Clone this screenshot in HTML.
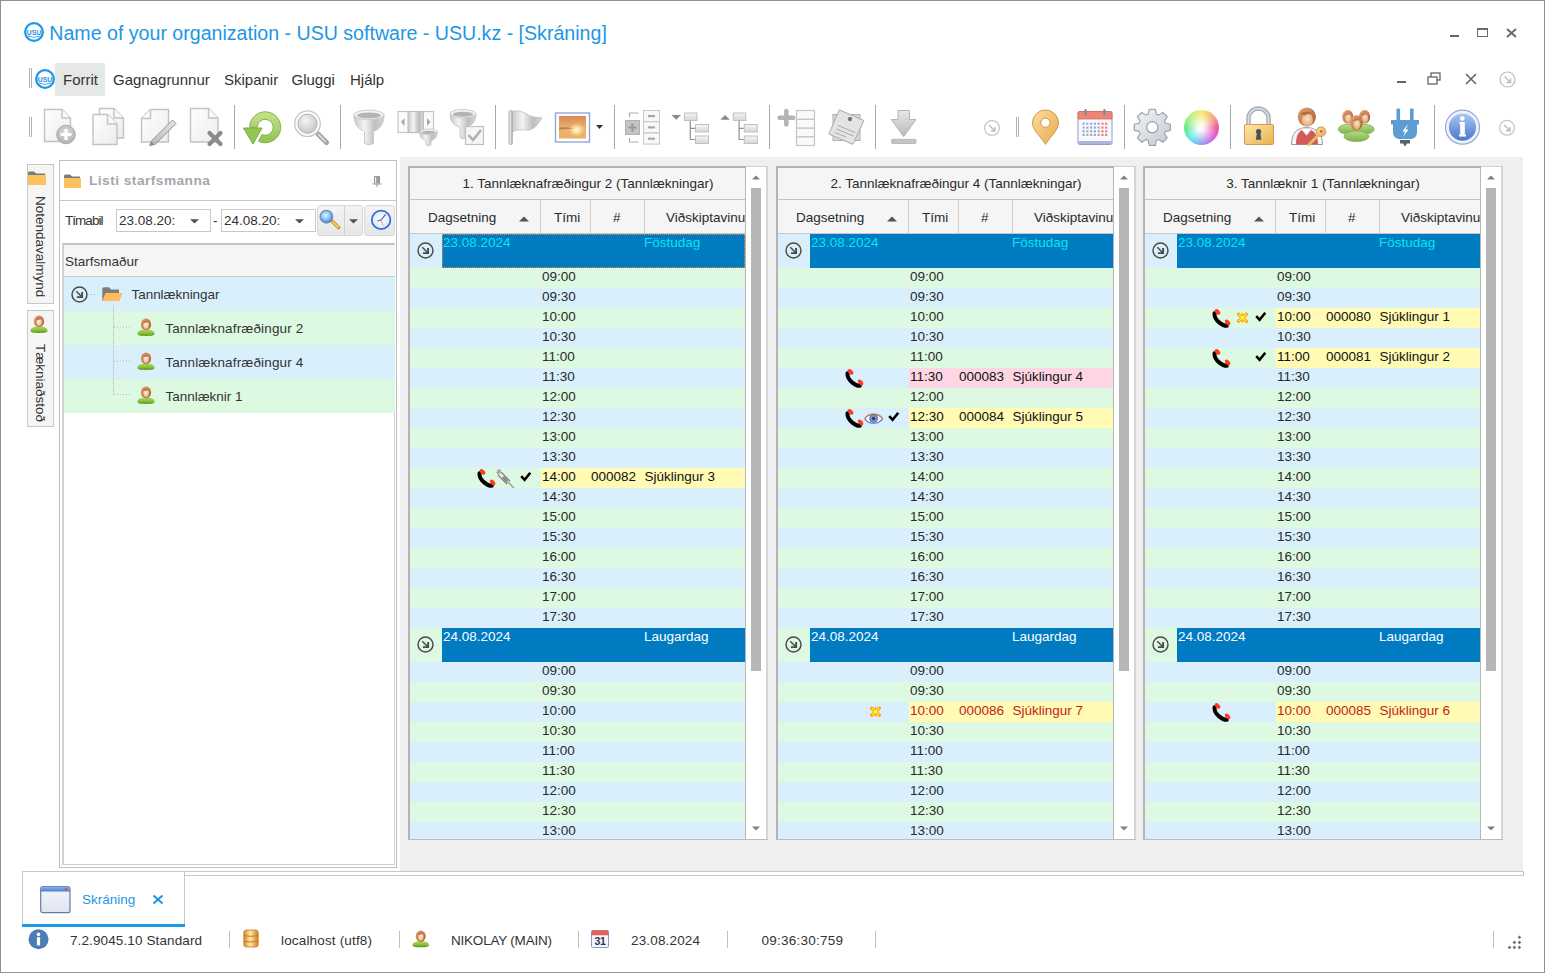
<!DOCTYPE html><html><head><meta charset="utf-8"><style>
html,body{margin:0;padding:0}
body{width:1545px;height:973px;position:relative;overflow:hidden;background:#fff;font-family:"Liberation Sans",sans-serif}
.t{position:absolute;white-space:pre;line-height:1;}
</style></head><body><div style="position:absolute;left:0px;top:0px;width:1545px;height:973px;box-sizing:border-box;border:1px solid #909090"></div>
<svg style="position:absolute;left:24px;top:22px" width="20" height="20" viewBox="0 0 20 20"><circle cx="10.0" cy="10.0" r="8.8" fill="none" stroke="#1e96ea" stroke-width="2.3"/><text x="10.0" y="12.5" text-anchor="middle" font-family="Liberation Sans" font-weight="700" font-size="7.6" fill="#1e8ee6" textLength="14.5" lengthAdjust="spacingAndGlyphs">USU</text><path d="M4.0 14.2 Q10.0 16.5 16.0 14.2" fill="none" stroke="#1e96ea" stroke-width="0.8"/></svg>
<div class="t" style="left:49.3px;top:24.41px;font-size:19.6px;color:#1e96e6;font-weight:400;">Name of your organization - USU software - USU.kz - [Skráning]</div>
<div style="position:absolute;left:1450px;top:35px;width:9px;height:2px;background:#666"></div>
<div style="position:absolute;left:1477px;top:28px;width:11px;height:9px;box-sizing:border-box;border:1px solid #6a6a6a;border-top-width:2px"></div>
<svg style="position:absolute;left:1506px;top:28px" width="11" height="10" viewBox="0 0 11 10"><path d="M1 1L10 9M10 1L1 9" stroke="#666" stroke-width="1.8"/></svg>
<div style="position:absolute;left:29px;top:68px;width:1px;height:20px;background:#b0b0b0"></div>
<div style="position:absolute;left:31px;top:68px;width:1px;height:20px;background:#b0b0b0"></div>
<svg style="position:absolute;left:35px;top:69px" width="20" height="20" viewBox="0 0 20 20"><circle cx="10.0" cy="10.0" r="8.8" fill="none" stroke="#1e96ea" stroke-width="2.3"/><text x="10.0" y="12.5" text-anchor="middle" font-family="Liberation Sans" font-weight="700" font-size="7.6" fill="#1e8ee6" textLength="14.5" lengthAdjust="spacingAndGlyphs">USU</text><path d="M4.0 14.2 Q10.0 16.5 16.0 14.2" fill="none" stroke="#1e96ea" stroke-width="0.8"/></svg>
<div style="position:absolute;left:55px;top:63px;width:50px;height:33px;background:#e6e7e7"></div>
<div class="t" style="left:63px;top:72.3px;font-size:15px;color:#333;font-weight:400;">Forrit</div>
<div class="t" style="left:113px;top:72.3px;font-size:15px;color:#333;font-weight:400;">Gagnagrunnur</div>
<div class="t" style="left:224px;top:72.3px;font-size:15px;color:#333;font-weight:400;">Skipanir</div>
<div class="t" style="left:291.5px;top:72.3px;font-size:15px;color:#333;font-weight:400;">Gluggi</div>
<div class="t" style="left:350px;top:72.3px;font-size:15px;color:#333;font-weight:400;">Hjálp</div>
<div style="position:absolute;left:1397px;top:81px;width:9px;height:2px;background:#666"></div>
<svg style="position:absolute;left:1427px;top:72px" width="14" height="14" viewBox="0 0 14 14"><rect x="4" y="1" width="9" height="7" fill="none" stroke="#666" stroke-width="1.3"/><rect x="1" y="5" width="9" height="7" fill="#fff" stroke="#666" stroke-width="1.3"/></svg>
<svg style="position:absolute;left:1465px;top:73px" width="12" height="12" viewBox="0 0 12 12"><path d="M1 1L11 11M11 1L1 11" stroke="#666" stroke-width="1.6"/></svg>
<svg style="position:absolute;left:1499px;top:71px" width="17" height="17" viewBox="0 0 17 17"><circle cx="8.5" cy="8.5" r="7.5" fill="none" stroke="#bbb" stroke-width="1.2"/><path d="M5.5 5.5L11.5 11.5M11.5 7.5V11.5H7.5" fill="none" stroke="#bbb" stroke-width="1.4"/></svg>
<svg style="position:absolute;left:0;top:0" width="1545" height="160" viewBox="0 0 1545 160"><defs>
<linearGradient id="gPage" x1="0" y1="0" x2="1" y2="1"><stop offset="0" stop-color="#ffffff"/><stop offset="1" stop-color="#ececec"/></linearGradient>
<linearGradient id="gMetal" x1="0" y1="0" x2="1" y2="0"><stop offset="0" stop-color="#c8c8c8"/><stop offset="0.35" stop-color="#f4f4f4"/><stop offset="0.7" stop-color="#bdbdbd"/><stop offset="1" stop-color="#d8d8d8"/></linearGradient>
<linearGradient id="gMetalV" x1="0" y1="0" x2="0" y2="1"><stop offset="0" stop-color="#e8e8e8"/><stop offset="1" stop-color="#b8b8b8"/></linearGradient>
<radialGradient id="gPlusC" cx="0.5" cy="0.4" r="0.6"><stop offset="0" stop-color="#e0e0e0"/><stop offset="1" stop-color="#b0b0b0"/></radialGradient>
<linearGradient id="gGreen" x1="0" y1="0" x2="0" y2="1"><stop offset="0" stop-color="#c6e38f"/><stop offset="1" stop-color="#8ec450"/></linearGradient>
<radialGradient id="gLens" cx="0.4" cy="0.35" r="0.7"><stop offset="0" stop-color="#f4f4f4"/><stop offset="1" stop-color="#c4c4c4"/></radialGradient>
<linearGradient id="gPhoto" x1="0" y1="0" x2="0" y2="1"><stop offset="0" stop-color="#d88a55"/><stop offset="0.55" stop-color="#f0b070"/><stop offset="1" stop-color="#e8b060"/></linearGradient>
<radialGradient id="gSun" cx="0.65" cy="0.62" r="0.35"><stop offset="0" stop-color="#fffbe0"/><stop offset="0.5" stop-color="#fce4a0" stop-opacity="0.7"/><stop offset="1" stop-color="#f0b070" stop-opacity="0"/></radialGradient>
<linearGradient id="gBoxG" x1="0" y1="0" x2="0" y2="1"><stop offset="0" stop-color="#f6f6f6"/><stop offset="1" stop-color="#d6d6d6"/></linearGradient>
<linearGradient id="gGold" x1="0" y1="0" x2="1" y2="1"><stop offset="0" stop-color="#fbe0a0"/><stop offset="1" stop-color="#e8a850"/></linearGradient>
<linearGradient id="gLock" x1="0" y1="0" x2="1" y2="1"><stop offset="0" stop-color="#fde9a8"/><stop offset="1" stop-color="#e9b04f"/></linearGradient>
<linearGradient id="gGear" x1="0" y1="0" x2="1" y2="1"><stop offset="0" stop-color="#f2f4f8"/><stop offset="1" stop-color="#c4c8d0"/></linearGradient>
<linearGradient id="gInfo" x1="0" y1="0" x2="0" y2="1"><stop offset="0" stop-color="#a8c8f4"/><stop offset="1" stop-color="#4a78c8"/></linearGradient>
<linearGradient id="gUGreen" x1="0" y1="0" x2="0" y2="1"><stop offset="0" stop-color="#b8dc88"/><stop offset="1" stop-color="#7cb048"/></linearGradient>
<linearGradient id="gHair" x1="0" y1="0" x2="1" y2="1"><stop offset="0" stop-color="#e4a878"/><stop offset="1" stop-color="#a85a30"/></linearGradient>
<radialGradient id="gFace" cx="0.5" cy="0.4" r="0.6"><stop offset="0" stop-color="#fde0c0"/><stop offset="1" stop-color="#e0a878"/></radialGradient>
</defs><rect x="29" y="117" width="1" height="20" fill="#b4b4b4"/><rect x="31" y="117" width="1" height="20" fill="#b4b4b4"/><rect x="234" y="105" width="1" height="44" fill="#a8a8a8"/><rect x="340" y="105" width="1" height="44" fill="#a8a8a8"/><rect x="495" y="105" width="1" height="44" fill="#a8a8a8"/><rect x="614" y="105" width="1" height="44" fill="#a8a8a8"/><rect x="769" y="105" width="1" height="44" fill="#a8a8a8"/><rect x="875" y="105" width="1" height="44" fill="#a8a8a8"/><rect x="1124" y="105" width="1" height="44" fill="#a8a8a8"/><rect x="1230" y="105" width="1" height="44" fill="#a8a8a8"/><rect x="1434" y="105" width="1" height="44" fill="#a8a8a8"/><rect x="1016" y="117" width="1" height="20" fill="#b4b4b4"/><rect x="1018" y="117" width="1" height="20" fill="#b4b4b4"/><path d="M44.5 109.5H62L70.5 118V141.5H44.5Z" fill="url(#gPage)" stroke="#c2c2c2" stroke-width="1.4"/><path d="M62 109.5V118H70.5" fill="#fafafa" stroke="#c2c2c2" stroke-width="1.4" stroke-linejoin="round"/><circle cx="66" cy="134.5" r="9.3" fill="url(#gPlusC)" stroke="#aaaaaa" stroke-width="1"/><path d="M66 129V140M60.5 134.5H71.5" stroke="#ffffff" stroke-width="3.2"/><path d="M99.5 108.5H114L123.5 118V138H99.5Z" fill="url(#gPage)" stroke="#c2c2c2" stroke-width="1.4"/><path d="M114 108.5V118H123.5" fill="#fafafa" stroke="#c2c2c2" stroke-width="1.4" stroke-linejoin="round"/><path d="M93 114.5H107.5L117 124V144.5H93Z" fill="url(#gPage)" stroke="#c2c2c2" stroke-width="1.4"/><path d="M107.5 114.5V124H117" fill="#fafafa" stroke="#c2c2c2" stroke-width="1.4" stroke-linejoin="round"/><path d="M150.5 109.5H168.5V142H141.5V118.5Z" fill="url(#gPage)" stroke="#c2c2c2" stroke-width="1.4"/><path d="M150.5 109.5V118.5H141.5" fill="#fafafa" stroke="#c2c2c2" stroke-width="1.4" stroke-linejoin="round"/><path d="M151 141.5L172.5 120L176 123.5L154.5 145Z" fill="url(#gMetalV)" stroke="#909090" stroke-width="1"/><path d="M149 146L151 141.5L154.5 145Z" fill="#888"/><path d="M190.5 108.5H208.5L218 118V142H190.5Z" fill="url(#gPage)" stroke="#c2c2c2" stroke-width="1.4"/><path d="M208.5 108.5V118H218" fill="#fafafa" stroke="#c2c2c2" stroke-width="1.4" stroke-linejoin="round"/><path d="M209.5 133L220.5 144M220.5 133L209.5 144" stroke="#8a8a8a" stroke-width="4.2" stroke-linecap="round"/><path d="M249.7 127.3 A15.5 15.5 0 1 1 258.65 141.35 L261.8 134.55 A8 8 0 1 0 257.2 127.3 Z" fill="url(#gGreen)" stroke="#86b048" stroke-width="1"/><path d="M243.5 128H262L253 144Z" fill="#92c654" stroke="#7aa83e" stroke-width="1" stroke-linejoin="round"/><path d="M318 134L326.5 142.5" stroke="#a4a4a4" stroke-width="5.2" stroke-linecap="round"/><path d="M318.5 134.5L325.5 141.5" stroke="#e4e4e4" stroke-width="1.6" stroke-linecap="round"/><circle cx="307.5" cy="123.7" r="12.8" fill="#fbfbfb" stroke="#c4c4c4" stroke-width="1.2"/><circle cx="307.5" cy="123.7" r="9.6" fill="url(#gLens)" stroke="#b4b4b4" stroke-width="1"/><path d="M354.0 114.8 C354.0 129.25 363.5 130.1 364.5 131.8 V143.5 Q369 146 373.5 143.5 V131.8 C374.5 130.1 384.0 129.25 384.0 114.8Z" fill="url(#gMetal)" stroke="#bdbdbd" stroke-width="0.8"/><ellipse cx="369" cy="114.8" rx="15.0" ry="4.8" fill="#f2f2f2" stroke="#c4c4c4" stroke-width="0.8"/><ellipse cx="369" cy="115.39999999999999" rx="12.0" ry="2.88" fill="#b4b4b4"/><rect x="398" y="111.5" width="35.5" height="21" fill="#fafafa" stroke="#c4c4c4" stroke-width="1.2"/><rect x="408" y="111.5" width="15.5" height="21" fill="url(#gMetal)" stroke="#bcbcbc" stroke-width="1"/><path d="M404.5 118V126L401 122Z" fill="#a8a8a8"/><path d="M427 118V126L430.5 122Z" fill="#a8a8a8"/><path d="M419.75 131.8 C419.75 139.45000000000002 425.0 139.9 426.0 140.8 V144.5 Q428.5 147 431.0 144.5 V140.8 C432.0 139.9 437.25 139.45000000000002 437.25 131.8Z" fill="url(#gMetal)" stroke="#bdbdbd" stroke-width="0.8"/><ellipse cx="428.5" cy="131.8" rx="8.75" ry="2.8000000000000003" fill="#f2f2f2" stroke="#c4c4c4" stroke-width="0.8"/><ellipse cx="428.5" cy="132.4" rx="7.0" ry="1.6800000000000002" fill="#b4b4b4"/><path d="M450.0 113.66 C450.0 125.56 459.0 126.25999999999999 460.0 127.66 V137.5 Q463 140 466.0 137.5 V127.66 C467.0 126.25999999999999 476.0 125.56 476.0 113.66Z" fill="url(#gMetal)" stroke="#bdbdbd" stroke-width="0.8"/><ellipse cx="463" cy="113.66" rx="13.0" ry="4.16" fill="#f2f2f2" stroke="#c4c4c4" stroke-width="0.8"/><ellipse cx="463" cy="114.25999999999999" rx="10.4" ry="2.496" fill="#b4b4b4"/><rect x="465.5" y="126.5" width="18" height="18" fill="#f6f6f6" stroke="#c0c0c0" stroke-width="1.2"/><path d="M468.5 135L473 140L481 130" fill="none" stroke="#b0b0b0" stroke-width="2.6"/><path d="M512 111.5 C520 109 526 114 530 116 C535 118 539 117 542 118 C538 124 534 130 528 130 C522 130 518 129 512 132Z" fill="url(#gMetal)" stroke="#bcbcbc" stroke-width="0.8"/><rect x="509" y="110.5" width="3.4" height="34" rx="1.5" fill="url(#gMetal)" stroke="#a8a8a8" stroke-width="0.8"/><rect x="555.5" y="113" width="34" height="29" fill="#fff" stroke="#93a6d6" stroke-width="1.4"/><rect x="559" y="116" width="27" height="22.5" fill="url(#gPhoto)"/><rect x="559" y="116" width="27" height="22.5" fill="url(#gSun)"/><path d="M559 127.5 Q566 126.5 574 128.5 L559 129.5Z" fill="#8a6040" opacity="0.55"/><path d="M596 125H603L599.5 129Z" fill="#333"/><rect x="625.5" y="120.5" width="14" height="14" fill="#c4c4c4" stroke="#b0b0b0" stroke-width="1"/><path d="M632.5 123.5V131.5M628.5 127.5H636.5" stroke="#9a9a9a" stroke-width="2.2"/><path d="M638.5 113H629.5V117M638.5 142H629.5V138" fill="none" stroke="#b0b0b0" stroke-width="1.2"/><rect x="643.5" y="110.5" width="16" height="11" fill="#f8f8f8" stroke="#c8c8c8" stroke-width="1"/><rect x="648" y="115.0" width="7" height="2.2" fill="#a8a8a8"/><rect x="643.5" y="121.8" width="16" height="11" fill="#f8f8f8" stroke="#c8c8c8" stroke-width="1"/><rect x="648" y="126.3" width="7" height="2.2" fill="#a8a8a8"/><rect x="643.5" y="133.1" width="16" height="11" fill="#f8f8f8" stroke="#c8c8c8" stroke-width="1"/><rect x="648" y="137.6" width="7" height="2.2" fill="#a8a8a8"/><path d="M671.5 115H681.0L676.25 119.8Z" fill="#8a8a8a"/><path d="M690.3 120.5V139.5H695.0M690.3 128.3H695.0" fill="none" stroke="#909090" stroke-width="1.2"/><rect x="684.5" y="113" width="12.5" height="7.5" fill="url(#gBoxG)" stroke="#c0c0c0" stroke-width="1"/><rect x="695.5" y="124.5" width="13" height="7.5" fill="url(#gBoxG)" stroke="#c0c0c0" stroke-width="1"/><rect x="695.5" y="136" width="13" height="7.5" fill="url(#gBoxG)" stroke="#c0c0c0" stroke-width="1"/><path d="M720.3 119.8H729.8L725.05 115Z" fill="#8a8a8a"/><path d="M739.0999999999999 120.5V139.5H743.8M739.0999999999999 128.3H743.8" fill="none" stroke="#909090" stroke-width="1.2"/><rect x="733.3" y="113" width="12.5" height="7.5" fill="url(#gBoxG)" stroke="#c0c0c0" stroke-width="1"/><rect x="744.3" y="124.5" width="13" height="7.5" fill="url(#gBoxG)" stroke="#c0c0c0" stroke-width="1"/><rect x="744.3" y="136" width="13" height="7.5" fill="url(#gBoxG)" stroke="#c0c0c0" stroke-width="1"/><path d="M786.3 111V124.5M779.5 117.7H793.3" stroke="#b4b4b4" stroke-width="4.5" stroke-linecap="round"/><rect x="796.5" y="110.5" width="18" height="35" fill="#fafafa" stroke="#c4c4c4" stroke-width="1.2"/><rect x="797" y="118.60000000000001" width="17" height="1.4" fill="#c4c4c4"/><rect x="797" y="127.4" width="17" height="1.4" fill="#c4c4c4"/><rect x="797" y="136.1" width="17" height="1.4" fill="#c4c4c4"/><rect x="833" y="114.5" width="27" height="26" fill="#d8d8d8" stroke="#b0b0b0" stroke-width="1"/><path d="M839.3 109.8L863.9 120.5L852.8 144.4L828.9 134Z" fill="#e4e4e4" stroke="#aaaaaa" stroke-width="1"/><circle cx="850" cy="119" r="2.2" fill="#777"/><path d="M838 125.5L855 132.5M836.5 129L853.5 136M835 132.5L846 137" stroke="#a0a0a0" stroke-width="0.9"/><path d="M898 110.5H909.5V119.5H916L903.7 136.7L891.3 119.5H898Z" fill="url(#gMetalV)" stroke="#b4b4b4" stroke-width="1"/><rect x="891.5" y="139.3" width="24.5" height="4.2" rx="1" fill="#c4c4c4" stroke="#b0b0b0" stroke-width="0.8"/><circle cx="992" cy="128" r="7.4" fill="none" stroke="#c4c4c4" stroke-width="1.2"/><path d="M989 125L995 131M995 127V131H991" fill="none" stroke="#bcbcbc" stroke-width="1.4"/><circle cx="1507" cy="127.8" r="7.4" fill="none" stroke="#c4c4c4" stroke-width="1.2"/><path d="M1504 124.8L1510 130.8M1510 126.8V130.8H1506" fill="none" stroke="#bcbcbc" stroke-width="1.4"/><path d="M1045.5 144.4 C1041 137 1032.5 130 1032.5 123 A13 13 0 0 1 1058.5 123 C1058.5 130 1050 137 1045.5 144.4Z" fill="url(#gGold)" stroke="#d09848" stroke-width="1"/><circle cx="1045.4" cy="122.7" r="4.6" fill="#fff" stroke="#d09848" stroke-width="1"/><rect x="1078" y="111.5" width="34" height="33" rx="1.5" fill="#f8faff" stroke="#8c9ccf" stroke-width="1"/><path d="M1078 113A1.5 1.5 0 0 1 1079.5 111.5H1110.5A1.5 1.5 0 0 1 1112 113V119H1078Z" fill="#ee8474" stroke="#d86a5c" stroke-width="0.8"/><rect x="1078.5" y="141" width="33" height="3" fill="#aab6dc"/><rect x="1084.5" y="109" width="2.2" height="6.5" rx="1" fill="#7a8aa0"/><rect x="1103.3" y="109" width="2.2" height="6.5" rx="1" fill="#7a8aa0"/><rect x="1082.50" y="122.60" width="2.2" height="2.2" fill="#9ea8cc"/><rect x="1086.27" y="122.60" width="2.2" height="2.2" fill="#9ea8cc"/><rect x="1090.04" y="122.60" width="2.2" height="2.2" fill="#9ea8cc"/><rect x="1093.81" y="122.60" width="2.2" height="2.2" fill="#9ea8cc"/><rect x="1097.58" y="122.60" width="2.2" height="2.2" fill="#9ea8cc"/><rect x="1101.35" y="122.60" width="2.2" height="2.2" fill="#f08070"/><rect x="1105.12" y="122.60" width="2.2" height="2.2" fill="#f08070"/><rect x="1082.50" y="126.50" width="2.2" height="2.2" fill="#9ea8cc"/><rect x="1086.27" y="126.50" width="2.2" height="2.2" fill="#9ea8cc"/><rect x="1090.04" y="126.50" width="2.2" height="2.2" fill="#9ea8cc"/><rect x="1093.81" y="126.50" width="2.2" height="2.2" fill="#9ea8cc"/><rect x="1097.58" y="126.50" width="2.2" height="2.2" fill="#9ea8cc"/><rect x="1101.35" y="126.50" width="2.2" height="2.2" fill="#f08070"/><rect x="1105.12" y="126.50" width="2.2" height="2.2" fill="#f08070"/><rect x="1082.50" y="130.20" width="2.2" height="2.2" fill="#9ea8cc"/><rect x="1086.27" y="130.20" width="2.2" height="2.2" fill="#9ea8cc"/><rect x="1090.04" y="130.20" width="2.2" height="2.2" fill="#9ea8cc"/><rect x="1093.81" y="130.20" width="2.2" height="2.2" fill="#9ea8cc"/><rect x="1097.58" y="130.20" width="2.2" height="2.2" fill="#9ea8cc"/><rect x="1101.35" y="130.20" width="2.2" height="2.2" fill="#f08070"/><rect x="1105.12" y="130.20" width="2.2" height="2.2" fill="#f08070"/><rect x="1082.50" y="133.80" width="2.2" height="2.2" fill="#9ea8cc"/><rect x="1086.27" y="133.80" width="2.2" height="2.2" fill="#9ea8cc"/><rect x="1090.04" y="133.80" width="2.2" height="2.2" fill="#9ea8cc"/><rect x="1093.81" y="133.80" width="2.2" height="2.2" fill="#9ea8cc"/><rect x="1097.58" y="133.80" width="2.2" height="2.2" fill="#9ea8cc"/><rect x="1101.35" y="133.80" width="2.2" height="2.2" fill="#f08070"/><rect x="1105.12" y="133.80" width="2.2" height="2.2" fill="#f08070"/><path d="M1148.22 114.12 L1149.20 109.26 L1155.40 109.26 L1156.38 114.12 L1158.74 115.09 L1162.86 112.36 L1167.24 116.74 L1164.51 120.86 L1165.48 123.22 L1170.34 124.20 L1170.34 130.40 L1165.48 131.38 L1164.51 133.74 L1167.24 137.86 L1162.86 142.24 L1158.74 139.51 L1156.38 140.48 L1155.40 145.34 L1149.20 145.34 L1148.22 140.48 L1145.86 139.51 L1141.74 142.24 L1137.36 137.86 L1140.09 133.74 L1139.12 131.38 L1134.26 130.40 L1134.26 124.20 L1139.12 123.22 L1140.09 120.86 L1137.36 116.74 L1141.74 112.36 L1145.86 115.09Z" fill="url(#gGear)" stroke="#9a9ea8" stroke-width="1.1" stroke-linejoin="round"/><circle cx="1152.3" cy="127.3" r="5.6" fill="#fff" stroke="#9a9ea8" stroke-width="1.2"/><path d="M1248.5 125V118.5A10 10 0 0 1 1268.5 118.5V125" fill="none" stroke="#a8b0bc" stroke-width="4.5"/><path d="M1248.5 125V118.5A10 10 0 0 1 1268.5 118.5V125" fill="none" stroke="#dce0e6" stroke-width="1.5"/><rect x="1244.5" y="124.5" width="29" height="20" rx="1.5" fill="url(#gLock)" stroke="#d49a50" stroke-width="1"/><circle cx="1258.6" cy="131.5" r="2.6" fill="#4a5060"/><path d="M1257 132L1255.8 139.8H1261.4L1260.2 132Z" fill="#4a5060"/><path d="M1291.5 144.5C1291.5 134 1296 128 1306.5 127.5C1317 128 1322.5 134 1322.5 144.5Z" fill="#f6f6f6" stroke="#9a9a9a" stroke-width="1"/><path d="M1296 144.5C1296 134 1299 130 1306.5 129C1314 130 1318 134 1318 144.5Z" fill="#d25a58"/><path d="M1300.5 128.2L1306.5 135.5L1312.5 128.2Z" fill="#ffffff" stroke="#bbb" stroke-width="0.6"/><ellipse cx="1306.8" cy="116.8" rx="9.2" ry="9.4" fill="url(#gHair)"/><ellipse cx="1307.3" cy="120" rx="5.6" ry="6.8" fill="url(#gFace)"/><path d="M1299.5 114 Q1306 109.5 1314.5 114.5 Q1310 112.5 1304 115.5Z" fill="#b86a3c"/><circle cx="1321" cy="131.7" r="4.8" fill="url(#gGold)" stroke="#d09848" stroke-width="1"/><circle cx="1321.3" cy="131.4" r="1.4" fill="#b07838"/><path d="M1318.5 135L1309 144.5" stroke="#f0b860" stroke-width="3" stroke-linecap="round"/><ellipse cx="1347.8" cy="129.25" rx="9.5" ry="4.95" fill="url(#gUGreen)" stroke="#86b054" stroke-width="0.8"/><ellipse cx="1347.8" cy="116.82" rx="5.609999999999999" ry="6.8" fill="url(#gHair)"/><ellipse cx="1348.1" cy="118.18" rx="3.23" ry="4.76" fill="url(#gFace)"/><path d="M1343.975 114.95 Q1347.8 111.55 1352.05 115.375 Q1348.6499999999999 113.675 1345.675 115.8Z" fill="#c07a48"/><ellipse cx="1364.6" cy="129.25" rx="9.5" ry="4.95" fill="url(#gUGreen)" stroke="#86b054" stroke-width="0.8"/><ellipse cx="1364.6" cy="116.82" rx="5.609999999999999" ry="6.8" fill="url(#gHair)"/><ellipse cx="1364.8999999999999" cy="118.18" rx="3.23" ry="4.76" fill="url(#gFace)"/><path d="M1360.7749999999999 114.95 Q1364.6 111.55 1368.85 115.375 Q1365.4499999999998 113.675 1362.475 115.8Z" fill="#c07a48"/><ellipse cx="1356.5" cy="136.325" rx="12.5" ry="5.2250000000000005" fill="url(#gUGreen)" stroke="#86b054" stroke-width="0.8"/><ellipse cx="1356.5" cy="122.74" rx="6.27" ry="7.6" fill="url(#gHair)"/><ellipse cx="1356.8" cy="124.26" rx="3.61" ry="5.319999999999999" fill="url(#gFace)"/><path d="M1352.225 120.65 Q1356.5 116.85 1361.25 121.125 Q1357.45 119.225 1354.125 121.6Z" fill="#c07a48"/><rect x="1396.5" y="108.5" width="3.6" height="12" rx="1" fill="#5b9dd2"/><rect x="1410" y="108.5" width="3.6" height="12" rx="1" fill="#5b9dd2"/><path d="M1391 120H1419V124.5H1417V132C1417 136.5 1414 139 1410 139H1400C1396 139 1393 136.5 1393 132V124.5H1391Z" fill="#5b9dd2"/><path d="M1407.2 125.2L1402.3 131.6H1405.2L1403.2 136.4L1408.6 129.4H1405.6L1407.8 125.2Z" fill="#fff"/><path d="M1400 140H1410V143.5H1407L1405 146.5L1403 143.5H1400Z" fill="#5a6270"/><circle cx="1462.5" cy="127.2" r="17" fill="#eef2fc" stroke="#98a6d8" stroke-width="1.2"/><circle cx="1462.5" cy="127.2" r="13.6" fill="url(#gInfo)"/><path d="M1459.5 122H1464.8V134.5H1466V136.5H1459V134.5H1460.2V124H1459.5Z" fill="#fff"/><circle cx="1462.3" cy="118.5" r="2.3" fill="#fff"/></svg>
<div style="position:absolute;left:1183.6px;top:109.8px;width:35px;height:35px;border-radius:50%;background:radial-gradient(circle at 48% 52%,#ffffff 0%,rgba(255,255,255,0.9) 12%,rgba(255,255,255,0) 62%),conic-gradient(from 0deg,#f4f070,#f6b080 45deg,#f05a98 90deg,#d860e0 135deg,#8aa0f0 180deg,#50e8f0 225deg,#60e880 270deg,#b8f080 315deg,#f4f070)"></div>
<div style="position:absolute;left:400px;top:157px;width:1123px;height:714px;background:#efefef"></div>
<div style="position:absolute;left:22px;top:871px;width:1501px;height:1px;background:#c8c8c8"></div>
<div style="position:absolute;left:185px;top:875px;width:1338px;height:1px;background:#c8c8c8"></div>
<div style="position:absolute;left:1523px;top:871px;width:1px;height:5px;background:#c8c8c8"></div>
<div style="position:absolute;left:27px;top:164px;width:27px;height:140px;box-sizing:border-box;border:1px solid #c8c8c8;background:#f5f5f5"></div>
<div style="position:absolute;left:27px;top:310px;width:27px;height:117px;box-sizing:border-box;border:1px solid #c8c8c8;background:#f5f5f5"></div>
<div class="t" style="left:33px;top:196px;font-size:13.5px;color:#333;writing-mode:vertical-rl">Notendavalmynd</div>
<div class="t" style="left:33px;top:344px;font-size:13.5px;color:#333;writing-mode:vertical-rl">Tækniaðstoð</div>
<div style="position:absolute;left:59px;top:160px;width:338px;height:708px;box-sizing:border-box;border:1px solid #c0c0c0;background:#fff"></div>
<div style="position:absolute;left:60px;top:200px;width:336px;height:1px;background:#c8c8c8"></div>
<div class="t" style="left:89px;top:174.4px;font-size:13.7px;color:#a4a6ac;font-weight:700;;letter-spacing:0.472px">Listi starfsmanna</div>
<div class="t" style="left:65px;top:213.57px;font-size:13.5px;color:#333;font-weight:400;;letter-spacing:-0.960px">Tímabil</div>
<div style="position:absolute;left:116px;top:209px;width:95px;height:23px;box-sizing:border-box;border:1px solid #c8c8c8;background:#fff"></div>
<div class="t" style="left:119px;top:213.57px;font-size:13.5px;color:#333;font-weight:400;">23.08.20:</div>
<svg style="position:absolute;left:190px;top:219px" width="9" height="5" viewBox="0 0 9 5"><path d="M0 0.2H9L4.5 4.6Z" fill="#505050"/></svg>
<div style="position:absolute;left:221px;top:209px;width:95px;height:23px;box-sizing:border-box;border:1px solid #c8c8c8;background:#fff"></div>
<div class="t" style="left:224px;top:213.57px;font-size:13.5px;color:#333;font-weight:400;">24.08.20:</div>
<svg style="position:absolute;left:295px;top:219px" width="9" height="5" viewBox="0 0 9 5"><path d="M0 0.2H9L4.5 4.6Z" fill="#505050"/></svg>
<div class="t" style="left:213px;top:213.57px;font-size:13.5px;color:#333;font-weight:400;">-</div>
<div style="position:absolute;left:317px;top:205px;width:46px;height:31px;box-sizing:border-box;border:1px solid #d8d8d8;border-radius:3px;background:linear-gradient(#f4f4f4,#e6e6e6)"></div>
<div style="position:absolute;left:344px;top:206px;width:1px;height:29px;background:#d0d0d0"></div>
<svg style="position:absolute;left:349px;top:219px" width="9" height="5" viewBox="0 0 9 5"><path d="M0 0.2H9L4.5 4.6Z" fill="#505050"/></svg>
<div style="position:absolute;left:364px;top:205px;width:31px;height:31px;box-sizing:border-box;border:1px solid #d8d8d8;border-radius:3px;background:linear-gradient(#f4f4f4,#e6e6e6)"></div>
<div style="position:absolute;left:62px;top:243px;width:333px;height:622px;box-sizing:border-box;border-top:2px solid #c4c4c4;border-left:2px solid #d0d0d0;border-bottom:1px solid #cfcfcf;border-right:1px solid #cfcfcf;background:#fff"></div>
<div style="position:absolute;left:64px;top:245px;width:331px;height:32px;background:#f5f5f5;border-bottom:1px solid #cfcfcf;box-sizing:border-box"></div>
<div class="t" style="left:65px;top:254.57px;font-size:13.5px;color:#333;font-weight:400;">Starfsmaður</div>
<div style="position:absolute;left:64px;top:277px;width:331px;height:34px;background:#d9effc"></div>
<div class="t" style="left:131.5px;top:288.07px;font-size:13.5px;color:#333;font-weight:400;;letter-spacing:-0.046px">Tannlækningar</div>
<div style="position:absolute;left:64px;top:311px;width:331px;height:34px;background:#ddf9e1"></div>
<div class="t" style="left:165.3px;top:322.07px;font-size:13.5px;color:#333;font-weight:400;;letter-spacing:0.154px">Tannlæknafræðingur 2</div>
<div style="position:absolute;left:64px;top:345px;width:331px;height:34px;background:#d9effc"></div>
<div class="t" style="left:165.3px;top:356.07px;font-size:13.5px;color:#333;font-weight:400;;letter-spacing:0.154px">Tannlæknafræðingur 4</div>
<div style="position:absolute;left:64px;top:379px;width:331px;height:34px;background:#ddf9e1"></div>
<div class="t" style="left:165.5px;top:390.07px;font-size:13.5px;color:#333;font-weight:400;;letter-spacing:-0.026px">Tannlæknir 1</div>
<svg style="position:absolute;left:69.9px;top:284.9px;" width="19.0" height="19.0" viewBox="0 0 19.0 19.0"><circle cx="9.5" cy="9.5" r="7.5" fill="none" stroke="#4a4a4a" stroke-width="1.45"/><path d="M6.3 6.3 L11.7 11.7" stroke="#4a4a4a" stroke-width="1.5"/><path d="M12.1 6.9 V12.1 H6.9" fill="none" stroke="#4a4a4a" stroke-width="1.9" stroke-linejoin="miter"/></svg><svg style="position:absolute;left:86px;top:286px;" width="50" height="110" viewBox="0 0 50 110"><path d="M2 8.5 H10" stroke="#b4b4b4" stroke-width="1" stroke-dasharray="1 2"/><path d="M27.5 19 V108" stroke="#b4b4b4" stroke-width="1" stroke-dasharray="1 1"/><path d="M28 41 H44 M28 75 H44 M28 108.5 H44" stroke="#b4b4b4" stroke-width="1" stroke-dasharray="1 2"/></svg><svg style="position:absolute;left:102.2px;top:287.4px;" width="21" height="14.5" viewBox="0 0 21 14.5"><path d="M0.3 2 Q0.3 0.3 2 0.3 H7 L9 2.5 H17 V14 H0.3Z" fill="#7c7c7c"/><path d="M0.3 14 L3.5 6 H20.5 L17.5 14Z" fill="#fdbd5c"/></svg><svg style="position:absolute;left:137px;top:318px;" width="19" height="20" viewBox="0 0 19 20"><defs><linearGradient id="pg1" x1="0" y1="0" x2="0" y2="1"><stop offset="0" stop-color="#a8da60"/><stop offset="0.6" stop-color="#86c232"/><stop offset="1" stop-color="#4a8a1c"/></linearGradient><linearGradient id="ph1" x1="0" y1="0" x2="1" y2="1"><stop offset="0" stop-color="#e0a070"/><stop offset="1" stop-color="#a85a30"/></linearGradient><radialGradient id="pf1" cx="0.4" cy="0.35" r="0.7"><stop offset="0" stop-color="#fff4e0"/><stop offset="0.6" stop-color="#f4c8a0"/><stop offset="1" stop-color="#c87850"/></radialGradient></defs><g transform="scale(1.0)"><path d="M0.4 15.8 C0.6 13 4 11.6 9 11.6 C14 11.6 17.4 13 17.6 15.8 C17.6 17.5 14 17.9 9 17.9 C4 17.9 0.4 17.5 0.4 15.8Z" fill="url(#pg1)"/><ellipse cx="9" cy="6.4" rx="5.1" ry="5.9" fill="url(#ph1)"/><ellipse cx="9.3" cy="7.6" rx="2.9" ry="4.1" fill="url(#pf1)"/><path d="M5.5 4.2 Q9 1.5 12.8 4.5 Q10.5 3.6 8 5 Z" fill="#c07040"/></g></svg><svg style="position:absolute;left:137px;top:352px;" width="19" height="20" viewBox="0 0 19 20"><defs><linearGradient id="pg2" x1="0" y1="0" x2="0" y2="1"><stop offset="0" stop-color="#a8da60"/><stop offset="0.6" stop-color="#86c232"/><stop offset="1" stop-color="#4a8a1c"/></linearGradient><linearGradient id="ph2" x1="0" y1="0" x2="1" y2="1"><stop offset="0" stop-color="#e0a070"/><stop offset="1" stop-color="#a85a30"/></linearGradient><radialGradient id="pf2" cx="0.4" cy="0.35" r="0.7"><stop offset="0" stop-color="#fff4e0"/><stop offset="0.6" stop-color="#f4c8a0"/><stop offset="1" stop-color="#c87850"/></radialGradient></defs><g transform="scale(1.0)"><path d="M0.4 15.8 C0.6 13 4 11.6 9 11.6 C14 11.6 17.4 13 17.6 15.8 C17.6 17.5 14 17.9 9 17.9 C4 17.9 0.4 17.5 0.4 15.8Z" fill="url(#pg2)"/><ellipse cx="9" cy="6.4" rx="5.1" ry="5.9" fill="url(#ph2)"/><ellipse cx="9.3" cy="7.6" rx="2.9" ry="4.1" fill="url(#pf2)"/><path d="M5.5 4.2 Q9 1.5 12.8 4.5 Q10.5 3.6 8 5 Z" fill="#c07040"/></g></svg><svg style="position:absolute;left:137px;top:386px;" width="19" height="20" viewBox="0 0 19 20"><defs><linearGradient id="pg3" x1="0" y1="0" x2="0" y2="1"><stop offset="0" stop-color="#a8da60"/><stop offset="0.6" stop-color="#86c232"/><stop offset="1" stop-color="#4a8a1c"/></linearGradient><linearGradient id="ph3" x1="0" y1="0" x2="1" y2="1"><stop offset="0" stop-color="#e0a070"/><stop offset="1" stop-color="#a85a30"/></linearGradient><radialGradient id="pf3" cx="0.4" cy="0.35" r="0.7"><stop offset="0" stop-color="#fff4e0"/><stop offset="0.6" stop-color="#f4c8a0"/><stop offset="1" stop-color="#c87850"/></radialGradient></defs><g transform="scale(1.0)"><path d="M0.4 15.8 C0.6 13 4 11.6 9 11.6 C14 11.6 17.4 13 17.6 15.8 C17.6 17.5 14 17.9 9 17.9 C4 17.9 0.4 17.5 0.4 15.8Z" fill="url(#pg3)"/><ellipse cx="9" cy="6.4" rx="5.1" ry="5.9" fill="url(#ph3)"/><ellipse cx="9.3" cy="7.6" rx="2.9" ry="4.1" fill="url(#pf3)"/><path d="M5.5 4.2 Q9 1.5 12.8 4.5 Q10.5 3.6 8 5 Z" fill="#c07040"/></g></svg>
<svg style="position:absolute;left:64px;top:174px;" width="17" height="14" viewBox="0 0 17 14"><path d="M0 2.2 Q0 0.5 1.5 0.5 H6 L8 2.5 H16 V5 H0Z" fill="#7a7a7a"/><rect x="0" y="4" width="17" height="10" fill="#fcc260"/></svg><svg style="position:absolute;left:371px;top:175px;" width="12" height="13" viewBox="0 0 12 13"><rect x="3" y="1" width="6" height="7.5" fill="#9a9a9a"/><rect x="4" y="2" width="1.2" height="6" fill="#e8e8e8"/><path d="M1 8.5 H11 L10 9.5 H2Z" fill="#9a9a9a"/><rect x="5.4" y="9" width="1.3" height="3" fill="#aaa"/></svg><svg style="position:absolute;left:318px;top:207px;" width="24" height="26" viewBox="0 0 24 26"><defs><radialGradient id="lensB" cx="0.45" cy="0.4" r="0.6"><stop offset="0" stop-color="#e8f8ff"/><stop offset="0.5" stop-color="#88c8f8"/><stop offset="1" stop-color="#3a80e0"/></radialGradient></defs><path d="M14.5 14.5 L20.5 20.5" stroke="#c89020" stroke-width="3.6" stroke-linecap="round"/><path d="M14.8 14.8 L20 20" stroke="#f8d060" stroke-width="1.8" stroke-linecap="round"/><circle cx="8.4" cy="9.7" r="6.4" fill="url(#lensB)" stroke="#7a88b0" stroke-width="1.1"/></svg><svg style="position:absolute;left:370px;top:209px;" width="22" height="22" viewBox="0 0 22 22"><defs><radialGradient id="clk" cx="0.5" cy="0.5" r="0.55"><stop offset="0" stop-color="#ffffff"/><stop offset="0.8" stop-color="#e0ecfc"/><stop offset="1" stop-color="#a8c4f0"/></radialGradient></defs><circle cx="11.1" cy="10.9" r="9.3" fill="url(#clk)" stroke="#3a6ed0" stroke-width="1.8"/><path d="M11 11 L15.6 5.4" stroke="#3a5cb0" stroke-width="1.1"/><path d="M11 11 L7.5 12" stroke="#3a5cb0" stroke-width="1.3"/><path d="M11 11 L13 16.5" stroke="#f08a6a" stroke-width="0.9"/></svg><svg style="position:absolute;left:28px;top:171px;" width="18" height="14" viewBox="0 0 18 14"><path d="M0 2.2 Q0 0.5 1.5 0.5 H6 L8 2.5 H17 V5 H0Z" fill="#7a7a7a"/><rect x="0" y="4" width="18" height="10" fill="#fcc260"/></svg><svg style="position:absolute;left:30px;top:315px;" width="19" height="20" viewBox="0 0 19 20"><defs><linearGradient id="pg4" x1="0" y1="0" x2="0" y2="1"><stop offset="0" stop-color="#a8da60"/><stop offset="0.6" stop-color="#86c232"/><stop offset="1" stop-color="#4a8a1c"/></linearGradient><linearGradient id="ph4" x1="0" y1="0" x2="1" y2="1"><stop offset="0" stop-color="#e0a070"/><stop offset="1" stop-color="#a85a30"/></linearGradient><radialGradient id="pf4" cx="0.4" cy="0.35" r="0.7"><stop offset="0" stop-color="#fff4e0"/><stop offset="0.6" stop-color="#f4c8a0"/><stop offset="1" stop-color="#c87850"/></radialGradient></defs><g transform="scale(1.0)"><path d="M0.4 15.8 C0.6 13 4 11.6 9 11.6 C14 11.6 17.4 13 17.6 15.8 C17.6 17.5 14 17.9 9 17.9 C4 17.9 0.4 17.5 0.4 15.8Z" fill="url(#pg4)"/><ellipse cx="9" cy="6.4" rx="5.1" ry="5.9" fill="url(#ph4)"/><ellipse cx="9.3" cy="7.6" rx="2.9" ry="4.1" fill="url(#pf4)"/><path d="M5.5 4.2 Q9 1.5 12.8 4.5 Q10.5 3.6 8 5 Z" fill="#c07040"/></g></svg>
<div style="position:absolute;left:408px;top:166px;width:360px;height:674px;background:#fff"></div>
<div style="position:absolute;left:408px;top:166px;width:338px;height:2px;background:#b4b4b4"></div>
<div style="position:absolute;left:746px;top:166px;width:22px;height:1px;background:#cfcfcf"></div>
<div style="position:absolute;left:408px;top:166px;width:2px;height:674px;background:#b4b4b4"></div>
<div style="position:absolute;left:766px;top:167px;width:2px;height:673px;background:#d6d6d6"></div>
<div style="position:absolute;left:408px;top:839px;width:360px;height:1px;background:#bcbcbc"></div>
<div style="position:absolute;left:745px;top:168px;width:1px;height:671px;background:#b8b8b8"></div>
<div style="position:absolute;left:410px;top:168px;width:335px;height:31px;background:#f5f5f5"></div>
<div style="position:absolute;left:410px;top:199px;width:335px;height:1px;background:#c4c4c4"></div>
<div style="position:absolute;left:410px;top:200px;width:335px;height:33px;background:#f5f5f5"></div>
<div style="position:absolute;left:410px;top:233px;width:335px;height:1px;background:#c8c8c8"></div>
<div style="position:absolute;left:540px;top:200px;width:1px;height:33px;background:#cfcfcf"></div>
<div style="position:absolute;left:590px;top:200px;width:1px;height:33px;background:#cfcfcf"></div>
<div style="position:absolute;left:644px;top:200px;width:1px;height:33px;background:#cfcfcf"></div>
<div class="t" style="left:408px;top:177.07px;font-size:13.5px;color:#2a2a2a;font-weight:400;text-align:center;width:360px">1. Tannlæknafræðingur 2 (Tannlækningar)</div>
<div class="t" style="left:428px;top:211.37px;font-size:13.5px;color:#2a2a2a;font-weight:400;">Dagsetning</div>
<svg style="position:absolute;left:519px;top:216px" width="10" height="6" viewBox="0 0 10 6"><path d="M0 5.5H10L5 0.5Z" fill="#555"/></svg>
<div class="t" style="left:554px;top:211.37px;font-size:13.5px;color:#2a2a2a;font-weight:400;">Tími</div>
<div class="t" style="left:613px;top:211.37px;font-size:13.5px;color:#2a2a2a;font-weight:400;">#</div>
<div class="t" style="left:645px;top:211.37px;width:100px;overflow:hidden;font-size:13.5px;color:#2a2a2a;text-indent:21px">Viðskiptavinur</div>
<svg style="position:absolute;left:752px;top:175px" width="8" height="5" viewBox="0 0 8 5"><path d="M0 4.5H8L4 0.5Z" fill="#808080"/></svg>
<svg style="position:absolute;left:752px;top:826px" width="8" height="5" viewBox="0 0 8 5"><path d="M0 0.5H8L4 4.5Z" fill="#808080"/></svg>
<div style="position:absolute;left:751px;top:188px;width:10px;height:483px;background:#b6b6b6"></div>
<div style="position:absolute;left:410px;top:234px;width:335px;height:34px;background:#d9effc"></div>
<div style="position:absolute;left:442px;top:234px;width:303px;height:34px;background:#007bc2"></div>
<div style="position:absolute;left:442px;top:234px;width:303px;height:34px;box-sizing:border-box;border:1px dotted #f08a30"></div>
<div class="t" style="left:443px;top:236.07px;font-size:13.5px;color:#00e8f4;font-weight:400;">23.08.2024</div>
<div class="t" style="left:644px;top:236.07px;font-size:13.5px;color:#00e8f4;font-weight:400;">Föstudag</div>
<svg style="position:absolute;left:415.6px;top:240.8px;" width="19.0" height="19.0" viewBox="0 0 19.0 19.0"><circle cx="9.5" cy="9.5" r="7.5" fill="none" stroke="#4a4a4a" stroke-width="1.45"/><path d="M6.3 6.3 L11.7 11.7" stroke="#4a4a4a" stroke-width="1.5"/><path d="M12.1 6.9 V12.1 H6.9" fill="none" stroke="#4a4a4a" stroke-width="1.9" stroke-linejoin="miter"/></svg>
<div style="position:absolute;left:410px;top:268px;width:335px;height:20px;background:#ddf9e1"></div>
<div class="t" style="left:542px;top:269.97px;font-size:13.5px;color:#2a2a2a;font-weight:400;">09:00</div>
<div style="position:absolute;left:410px;top:288px;width:335px;height:20px;background:#d9effc"></div>
<div class="t" style="left:542px;top:289.97px;font-size:13.5px;color:#2a2a2a;font-weight:400;">09:30</div>
<div style="position:absolute;left:410px;top:308px;width:335px;height:20px;background:#ddf9e1"></div>
<div class="t" style="left:542px;top:309.97px;font-size:13.5px;color:#2a2a2a;font-weight:400;">10:00</div>
<div style="position:absolute;left:410px;top:328px;width:335px;height:20px;background:#d9effc"></div>
<div class="t" style="left:542px;top:329.97px;font-size:13.5px;color:#2a2a2a;font-weight:400;">10:30</div>
<div style="position:absolute;left:410px;top:348px;width:335px;height:20px;background:#ddf9e1"></div>
<div class="t" style="left:542px;top:349.97px;font-size:13.5px;color:#2a2a2a;font-weight:400;">11:00</div>
<div style="position:absolute;left:410px;top:368px;width:335px;height:20px;background:#d9effc"></div>
<div class="t" style="left:542px;top:369.97px;font-size:13.5px;color:#2a2a2a;font-weight:400;">11:30</div>
<div style="position:absolute;left:410px;top:388px;width:335px;height:20px;background:#ddf9e1"></div>
<div class="t" style="left:542px;top:389.97px;font-size:13.5px;color:#2a2a2a;font-weight:400;">12:00</div>
<div style="position:absolute;left:410px;top:408px;width:335px;height:20px;background:#d9effc"></div>
<div class="t" style="left:542px;top:409.97px;font-size:13.5px;color:#2a2a2a;font-weight:400;">12:30</div>
<div style="position:absolute;left:410px;top:428px;width:335px;height:20px;background:#ddf9e1"></div>
<div class="t" style="left:542px;top:429.97px;font-size:13.5px;color:#2a2a2a;font-weight:400;">13:00</div>
<div style="position:absolute;left:410px;top:448px;width:335px;height:20px;background:#d9effc"></div>
<div class="t" style="left:542px;top:449.97px;font-size:13.5px;color:#2a2a2a;font-weight:400;">13:30</div>
<div style="position:absolute;left:410px;top:468px;width:335px;height:20px;background:#ddf9e1"></div>
<div style="position:absolute;left:541px;top:468px;width:204px;height:20px;background:#fffab4"></div>
<div class="t" style="left:591px;top:469.97px;font-size:13.5px;color:#111;font-weight:400;">000082</div>
<div class="t" style="left:644.5px;top:469.97px;font-size:13.5px;color:#111;font-weight:400;">Sjúklingur 3</div>
<svg style="position:absolute;left:476px;top:467.5px" width="22" height="22" viewBox="0 0 22 22"><path d="M3.5 5.2 C3.2 8.6 5 11.8 8.4 14.6 C10.8 16.6 13.4 18 15.8 17.8" stroke="#000" stroke-width="4" fill="none" stroke-linecap="round"/><ellipse cx="6.5" cy="3.9" rx="3.3" ry="2.1" transform="rotate(45 6.5 3.9)" fill="#ff3b24"/><ellipse cx="16.6" cy="14.4" rx="3.3" ry="2.1" transform="rotate(50 16.6 14.4)" fill="#ff3b24"/></svg><svg style="position:absolute;left:495px;top:468px" width="22" height="22" viewBox="0 0 22 22"><path d="M12.5 13.5 L19.8 21" stroke="#9a9a9a" stroke-width="1.3" stroke-linecap="round"/><path d="M4.5 5.5 L13.5 14.5" stroke="#7a7a7a" stroke-width="5.4" stroke-linecap="butt"/><path d="M4.8 5.8 L13.2 14.2" stroke="#e8e8e8" stroke-width="3.2"/><path d="M8 9 L12.5 13.5" stroke="#8a8a8a" stroke-width="3"/><path d="M2 5.5 L5.5 2" stroke="#9a9a9a" stroke-width="2.2"/><path d="M2.5 1.8 L4 3.3" stroke="#aaa" stroke-width="2.4"/></svg><svg style="position:absolute;left:520px;top:471px" width="12" height="12" viewBox="0 0 12 12"><path d="M1.2 5.2 L4.6 8.8 L10.3 1.8" stroke="#000" stroke-width="2.6" fill="none" stroke-linejoin="miter"/></svg>
<div class="t" style="left:542px;top:469.97px;font-size:13.5px;color:#111;font-weight:400;">14:00</div>
<div style="position:absolute;left:410px;top:488px;width:335px;height:20px;background:#d9effc"></div>
<div class="t" style="left:542px;top:489.97px;font-size:13.5px;color:#2a2a2a;font-weight:400;">14:30</div>
<div style="position:absolute;left:410px;top:508px;width:335px;height:20px;background:#ddf9e1"></div>
<div class="t" style="left:542px;top:509.97px;font-size:13.5px;color:#2a2a2a;font-weight:400;">15:00</div>
<div style="position:absolute;left:410px;top:528px;width:335px;height:20px;background:#d9effc"></div>
<div class="t" style="left:542px;top:529.97px;font-size:13.5px;color:#2a2a2a;font-weight:400;">15:30</div>
<div style="position:absolute;left:410px;top:548px;width:335px;height:20px;background:#ddf9e1"></div>
<div class="t" style="left:542px;top:549.97px;font-size:13.5px;color:#2a2a2a;font-weight:400;">16:00</div>
<div style="position:absolute;left:410px;top:568px;width:335px;height:20px;background:#d9effc"></div>
<div class="t" style="left:542px;top:569.97px;font-size:13.5px;color:#2a2a2a;font-weight:400;">16:30</div>
<div style="position:absolute;left:410px;top:588px;width:335px;height:20px;background:#ddf9e1"></div>
<div class="t" style="left:542px;top:589.97px;font-size:13.5px;color:#2a2a2a;font-weight:400;">17:00</div>
<div style="position:absolute;left:410px;top:608px;width:335px;height:20px;background:#d9effc"></div>
<div class="t" style="left:542px;top:609.97px;font-size:13.5px;color:#2a2a2a;font-weight:400;">17:30</div>
<div style="position:absolute;left:410px;top:628px;width:335px;height:34px;background:#ddf9e1"></div>
<div style="position:absolute;left:442px;top:628px;width:303px;height:34px;background:#007bc2"></div>
<div class="t" style="left:443px;top:630.07px;font-size:13.5px;color:#ffffff;font-weight:400;">24.08.2024</div>
<div class="t" style="left:644px;top:630.07px;font-size:13.5px;color:#ffffff;font-weight:400;">Laugardag</div>
<svg style="position:absolute;left:415.6px;top:634.8px;" width="19.0" height="19.0" viewBox="0 0 19.0 19.0"><circle cx="9.5" cy="9.5" r="7.5" fill="none" stroke="#4a4a4a" stroke-width="1.45"/><path d="M6.3 6.3 L11.7 11.7" stroke="#4a4a4a" stroke-width="1.5"/><path d="M12.1 6.9 V12.1 H6.9" fill="none" stroke="#4a4a4a" stroke-width="1.9" stroke-linejoin="miter"/></svg>
<div style="position:absolute;left:410px;top:662px;width:335px;height:20px;background:#d9effc"></div>
<div class="t" style="left:542px;top:663.97px;font-size:13.5px;color:#2a2a2a;font-weight:400;">09:00</div>
<div style="position:absolute;left:410px;top:682px;width:335px;height:20px;background:#ddf9e1"></div>
<div class="t" style="left:542px;top:683.97px;font-size:13.5px;color:#2a2a2a;font-weight:400;">09:30</div>
<div style="position:absolute;left:410px;top:702px;width:335px;height:20px;background:#d9effc"></div>
<div class="t" style="left:542px;top:703.97px;font-size:13.5px;color:#2a2a2a;font-weight:400;">10:00</div>
<div style="position:absolute;left:410px;top:722px;width:335px;height:20px;background:#ddf9e1"></div>
<div class="t" style="left:542px;top:723.97px;font-size:13.5px;color:#2a2a2a;font-weight:400;">10:30</div>
<div style="position:absolute;left:410px;top:742px;width:335px;height:20px;background:#d9effc"></div>
<div class="t" style="left:542px;top:743.97px;font-size:13.5px;color:#2a2a2a;font-weight:400;">11:00</div>
<div style="position:absolute;left:410px;top:762px;width:335px;height:20px;background:#ddf9e1"></div>
<div class="t" style="left:542px;top:763.97px;font-size:13.5px;color:#2a2a2a;font-weight:400;">11:30</div>
<div style="position:absolute;left:410px;top:782px;width:335px;height:20px;background:#d9effc"></div>
<div class="t" style="left:542px;top:783.97px;font-size:13.5px;color:#2a2a2a;font-weight:400;">12:00</div>
<div style="position:absolute;left:410px;top:802px;width:335px;height:20px;background:#ddf9e1"></div>
<div class="t" style="left:542px;top:803.97px;font-size:13.5px;color:#2a2a2a;font-weight:400;">12:30</div>
<div style="position:absolute;left:410px;top:822px;width:335px;height:17px;background:#d9effc"></div>
<div class="t" style="left:542px;top:823.97px;font-size:13.5px;color:#2a2a2a;font-weight:400;">13:00</div>
<div style="position:absolute;left:776px;top:166px;width:360px;height:674px;background:#fff"></div>
<div style="position:absolute;left:776px;top:166px;width:338px;height:2px;background:#b4b4b4"></div>
<div style="position:absolute;left:1114px;top:166px;width:22px;height:1px;background:#cfcfcf"></div>
<div style="position:absolute;left:776px;top:166px;width:2px;height:674px;background:#b4b4b4"></div>
<div style="position:absolute;left:1134px;top:167px;width:2px;height:673px;background:#d6d6d6"></div>
<div style="position:absolute;left:776px;top:839px;width:360px;height:1px;background:#bcbcbc"></div>
<div style="position:absolute;left:1113px;top:168px;width:1px;height:671px;background:#b8b8b8"></div>
<div style="position:absolute;left:778px;top:168px;width:335px;height:31px;background:#f5f5f5"></div>
<div style="position:absolute;left:778px;top:199px;width:335px;height:1px;background:#c4c4c4"></div>
<div style="position:absolute;left:778px;top:200px;width:335px;height:33px;background:#f5f5f5"></div>
<div style="position:absolute;left:778px;top:233px;width:335px;height:1px;background:#c8c8c8"></div>
<div style="position:absolute;left:908px;top:200px;width:1px;height:33px;background:#cfcfcf"></div>
<div style="position:absolute;left:958px;top:200px;width:1px;height:33px;background:#cfcfcf"></div>
<div style="position:absolute;left:1012px;top:200px;width:1px;height:33px;background:#cfcfcf"></div>
<div class="t" style="left:776px;top:177.07px;font-size:13.5px;color:#2a2a2a;font-weight:400;text-align:center;width:360px">2. Tannlæknafræðingur 4 (Tannlækningar)</div>
<div class="t" style="left:796px;top:211.37px;font-size:13.5px;color:#2a2a2a;font-weight:400;">Dagsetning</div>
<svg style="position:absolute;left:887px;top:216px" width="10" height="6" viewBox="0 0 10 6"><path d="M0 5.5H10L5 0.5Z" fill="#555"/></svg>
<div class="t" style="left:922px;top:211.37px;font-size:13.5px;color:#2a2a2a;font-weight:400;">Tími</div>
<div class="t" style="left:981px;top:211.37px;font-size:13.5px;color:#2a2a2a;font-weight:400;">#</div>
<div class="t" style="left:1013px;top:211.37px;width:100px;overflow:hidden;font-size:13.5px;color:#2a2a2a;text-indent:21px">Viðskiptavinur</div>
<svg style="position:absolute;left:1120px;top:175px" width="8" height="5" viewBox="0 0 8 5"><path d="M0 4.5H8L4 0.5Z" fill="#808080"/></svg>
<svg style="position:absolute;left:1120px;top:826px" width="8" height="5" viewBox="0 0 8 5"><path d="M0 0.5H8L4 4.5Z" fill="#808080"/></svg>
<div style="position:absolute;left:1119px;top:188px;width:10px;height:483px;background:#b6b6b6"></div>
<div style="position:absolute;left:778px;top:234px;width:335px;height:34px;background:#d9effc"></div>
<div style="position:absolute;left:810px;top:234px;width:303px;height:34px;background:#007bc2"></div>
<div class="t" style="left:811px;top:236.07px;font-size:13.5px;color:#00e8f4;font-weight:400;">23.08.2024</div>
<div class="t" style="left:1012px;top:236.07px;font-size:13.5px;color:#00e8f4;font-weight:400;">Föstudag</div>
<svg style="position:absolute;left:783.6px;top:240.8px;" width="19.0" height="19.0" viewBox="0 0 19.0 19.0"><circle cx="9.5" cy="9.5" r="7.5" fill="none" stroke="#4a4a4a" stroke-width="1.45"/><path d="M6.3 6.3 L11.7 11.7" stroke="#4a4a4a" stroke-width="1.5"/><path d="M12.1 6.9 V12.1 H6.9" fill="none" stroke="#4a4a4a" stroke-width="1.9" stroke-linejoin="miter"/></svg>
<div style="position:absolute;left:778px;top:268px;width:335px;height:20px;background:#ddf9e1"></div>
<div class="t" style="left:910px;top:269.97px;font-size:13.5px;color:#2a2a2a;font-weight:400;">09:00</div>
<div style="position:absolute;left:778px;top:288px;width:335px;height:20px;background:#d9effc"></div>
<div class="t" style="left:910px;top:289.97px;font-size:13.5px;color:#2a2a2a;font-weight:400;">09:30</div>
<div style="position:absolute;left:778px;top:308px;width:335px;height:20px;background:#ddf9e1"></div>
<div class="t" style="left:910px;top:309.97px;font-size:13.5px;color:#2a2a2a;font-weight:400;">10:00</div>
<div style="position:absolute;left:778px;top:328px;width:335px;height:20px;background:#d9effc"></div>
<div class="t" style="left:910px;top:329.97px;font-size:13.5px;color:#2a2a2a;font-weight:400;">10:30</div>
<div style="position:absolute;left:778px;top:348px;width:335px;height:20px;background:#ddf9e1"></div>
<div class="t" style="left:910px;top:349.97px;font-size:13.5px;color:#2a2a2a;font-weight:400;">11:00</div>
<div style="position:absolute;left:778px;top:368px;width:335px;height:20px;background:#d9effc"></div>
<div style="position:absolute;left:909px;top:368px;width:204px;height:20px;background:#fdd5e3"></div>
<div class="t" style="left:959px;top:369.97px;font-size:13.5px;color:#111;font-weight:400;">000083</div>
<div class="t" style="left:1012.5px;top:369.97px;font-size:13.5px;color:#111;font-weight:400;">Sjúklingur 4</div>
<svg style="position:absolute;left:844px;top:367.5px" width="22" height="22" viewBox="0 0 22 22"><path d="M3.5 5.2 C3.2 8.6 5 11.8 8.4 14.6 C10.8 16.6 13.4 18 15.8 17.8" stroke="#000" stroke-width="4" fill="none" stroke-linecap="round"/><ellipse cx="6.5" cy="3.9" rx="3.3" ry="2.1" transform="rotate(45 6.5 3.9)" fill="#ff3b24"/><ellipse cx="16.6" cy="14.4" rx="3.3" ry="2.1" transform="rotate(50 16.6 14.4)" fill="#ff3b24"/></svg>
<div class="t" style="left:910px;top:369.97px;font-size:13.5px;color:#111;font-weight:400;">11:30</div>
<div style="position:absolute;left:778px;top:388px;width:335px;height:20px;background:#ddf9e1"></div>
<div class="t" style="left:910px;top:389.97px;font-size:13.5px;color:#2a2a2a;font-weight:400;">12:00</div>
<div style="position:absolute;left:778px;top:408px;width:335px;height:20px;background:#d9effc"></div>
<div style="position:absolute;left:909px;top:408px;width:204px;height:20px;background:#fffab4"></div>
<div class="t" style="left:959px;top:409.97px;font-size:13.5px;color:#111;font-weight:400;">000084</div>
<div class="t" style="left:1012.5px;top:409.97px;font-size:13.5px;color:#111;font-weight:400;">Sjúklingur 5</div>
<svg style="position:absolute;left:844px;top:407.5px" width="22" height="22" viewBox="0 0 22 22"><path d="M3.5 5.2 C3.2 8.6 5 11.8 8.4 14.6 C10.8 16.6 13.4 18 15.8 17.8" stroke="#000" stroke-width="4" fill="none" stroke-linecap="round"/><ellipse cx="6.5" cy="3.9" rx="3.3" ry="2.1" transform="rotate(45 6.5 3.9)" fill="#ff3b24"/><ellipse cx="16.6" cy="14.4" rx="3.3" ry="2.1" transform="rotate(50 16.6 14.4)" fill="#ff3b24"/></svg><svg style="position:absolute;left:863.5px;top:411.5px" width="20" height="14" viewBox="0 0 20 14"><path d="M0.8 6.8 C4 0.8 15 0.8 18.6 6.8 C15 12.8 4 12.8 0.8 6.8Z" fill="#f6f6fa" stroke="#5a6ab0" stroke-width="1.1"/><path d="M0.8 6.8 C4 0.8 15 0.8 18.6 6.8" fill="none" stroke="#c8905a" stroke-width="1.5"/><circle cx="9.6" cy="6.4" r="3.9" fill="#7f94c8" stroke="#4a5ca0" stroke-width="0.8"/><circle cx="9.6" cy="6.4" r="1.6" fill="#2a3470"/></svg><svg style="position:absolute;left:888px;top:411px" width="12" height="12" viewBox="0 0 12 12"><path d="M1.2 5.2 L4.6 8.8 L10.3 1.8" stroke="#000" stroke-width="2.6" fill="none" stroke-linejoin="miter"/></svg>
<div class="t" style="left:910px;top:409.97px;font-size:13.5px;color:#111;font-weight:400;">12:30</div>
<div style="position:absolute;left:778px;top:428px;width:335px;height:20px;background:#ddf9e1"></div>
<div class="t" style="left:910px;top:429.97px;font-size:13.5px;color:#2a2a2a;font-weight:400;">13:00</div>
<div style="position:absolute;left:778px;top:448px;width:335px;height:20px;background:#d9effc"></div>
<div class="t" style="left:910px;top:449.97px;font-size:13.5px;color:#2a2a2a;font-weight:400;">13:30</div>
<div style="position:absolute;left:778px;top:468px;width:335px;height:20px;background:#ddf9e1"></div>
<div class="t" style="left:910px;top:469.97px;font-size:13.5px;color:#2a2a2a;font-weight:400;">14:00</div>
<div style="position:absolute;left:778px;top:488px;width:335px;height:20px;background:#d9effc"></div>
<div class="t" style="left:910px;top:489.97px;font-size:13.5px;color:#2a2a2a;font-weight:400;">14:30</div>
<div style="position:absolute;left:778px;top:508px;width:335px;height:20px;background:#ddf9e1"></div>
<div class="t" style="left:910px;top:509.97px;font-size:13.5px;color:#2a2a2a;font-weight:400;">15:00</div>
<div style="position:absolute;left:778px;top:528px;width:335px;height:20px;background:#d9effc"></div>
<div class="t" style="left:910px;top:529.97px;font-size:13.5px;color:#2a2a2a;font-weight:400;">15:30</div>
<div style="position:absolute;left:778px;top:548px;width:335px;height:20px;background:#ddf9e1"></div>
<div class="t" style="left:910px;top:549.97px;font-size:13.5px;color:#2a2a2a;font-weight:400;">16:00</div>
<div style="position:absolute;left:778px;top:568px;width:335px;height:20px;background:#d9effc"></div>
<div class="t" style="left:910px;top:569.97px;font-size:13.5px;color:#2a2a2a;font-weight:400;">16:30</div>
<div style="position:absolute;left:778px;top:588px;width:335px;height:20px;background:#ddf9e1"></div>
<div class="t" style="left:910px;top:589.97px;font-size:13.5px;color:#2a2a2a;font-weight:400;">17:00</div>
<div style="position:absolute;left:778px;top:608px;width:335px;height:20px;background:#d9effc"></div>
<div class="t" style="left:910px;top:609.97px;font-size:13.5px;color:#2a2a2a;font-weight:400;">17:30</div>
<div style="position:absolute;left:778px;top:628px;width:335px;height:34px;background:#ddf9e1"></div>
<div style="position:absolute;left:810px;top:628px;width:303px;height:34px;background:#007bc2"></div>
<div class="t" style="left:811px;top:630.07px;font-size:13.5px;color:#ffffff;font-weight:400;">24.08.2024</div>
<div class="t" style="left:1012px;top:630.07px;font-size:13.5px;color:#ffffff;font-weight:400;">Laugardag</div>
<svg style="position:absolute;left:783.6px;top:634.8px;" width="19.0" height="19.0" viewBox="0 0 19.0 19.0"><circle cx="9.5" cy="9.5" r="7.5" fill="none" stroke="#4a4a4a" stroke-width="1.45"/><path d="M6.3 6.3 L11.7 11.7" stroke="#4a4a4a" stroke-width="1.5"/><path d="M12.1 6.9 V12.1 H6.9" fill="none" stroke="#4a4a4a" stroke-width="1.9" stroke-linejoin="miter"/></svg>
<div style="position:absolute;left:778px;top:662px;width:335px;height:20px;background:#d9effc"></div>
<div class="t" style="left:910px;top:663.97px;font-size:13.5px;color:#2a2a2a;font-weight:400;">09:00</div>
<div style="position:absolute;left:778px;top:682px;width:335px;height:20px;background:#ddf9e1"></div>
<div class="t" style="left:910px;top:683.97px;font-size:13.5px;color:#2a2a2a;font-weight:400;">09:30</div>
<div style="position:absolute;left:778px;top:702px;width:335px;height:20px;background:#d9effc"></div>
<div style="position:absolute;left:909px;top:702px;width:204px;height:20px;background:#fffab4"></div>
<div class="t" style="left:959px;top:703.97px;font-size:13.5px;color:#c41c1c;font-weight:400;">000086</div>
<div class="t" style="left:1012.5px;top:703.97px;font-size:13.5px;color:#c41c1c;font-weight:400;">Sjúklingur 7</div>
<svg style="position:absolute;left:868.5px;top:706px" width="13" height="12" viewBox="0 0 13 12"><path d="M2.6 2.2 L10.4 9.2 M10.4 2.2 L2.6 9.2" stroke="#ff9a10" stroke-width="3.2" stroke-linecap="round"/><path d="M6.5 0.6 V10.8" stroke="#ffa020" stroke-width="1.1"/><path d="M3 2.6 L10 8.8 M10 2.6 L3 8.8" stroke="#fff21a" stroke-width="1.4" stroke-linecap="round"/><circle cx="6.5" cy="5.7" r="1.7" fill="#fff850"/></svg>
<div class="t" style="left:910px;top:703.97px;font-size:13.5px;color:#c41c1c;font-weight:400;">10:00</div>
<div style="position:absolute;left:778px;top:722px;width:335px;height:20px;background:#ddf9e1"></div>
<div class="t" style="left:910px;top:723.97px;font-size:13.5px;color:#2a2a2a;font-weight:400;">10:30</div>
<div style="position:absolute;left:778px;top:742px;width:335px;height:20px;background:#d9effc"></div>
<div class="t" style="left:910px;top:743.97px;font-size:13.5px;color:#2a2a2a;font-weight:400;">11:00</div>
<div style="position:absolute;left:778px;top:762px;width:335px;height:20px;background:#ddf9e1"></div>
<div class="t" style="left:910px;top:763.97px;font-size:13.5px;color:#2a2a2a;font-weight:400;">11:30</div>
<div style="position:absolute;left:778px;top:782px;width:335px;height:20px;background:#d9effc"></div>
<div class="t" style="left:910px;top:783.97px;font-size:13.5px;color:#2a2a2a;font-weight:400;">12:00</div>
<div style="position:absolute;left:778px;top:802px;width:335px;height:20px;background:#ddf9e1"></div>
<div class="t" style="left:910px;top:803.97px;font-size:13.5px;color:#2a2a2a;font-weight:400;">12:30</div>
<div style="position:absolute;left:778px;top:822px;width:335px;height:17px;background:#d9effc"></div>
<div class="t" style="left:910px;top:823.97px;font-size:13.5px;color:#2a2a2a;font-weight:400;">13:00</div>
<div style="position:absolute;left:1143px;top:166px;width:360px;height:674px;background:#fff"></div>
<div style="position:absolute;left:1143px;top:166px;width:338px;height:2px;background:#b4b4b4"></div>
<div style="position:absolute;left:1481px;top:166px;width:22px;height:1px;background:#cfcfcf"></div>
<div style="position:absolute;left:1143px;top:166px;width:2px;height:674px;background:#b4b4b4"></div>
<div style="position:absolute;left:1501px;top:167px;width:2px;height:673px;background:#d6d6d6"></div>
<div style="position:absolute;left:1143px;top:839px;width:360px;height:1px;background:#bcbcbc"></div>
<div style="position:absolute;left:1480px;top:168px;width:1px;height:671px;background:#b8b8b8"></div>
<div style="position:absolute;left:1145px;top:168px;width:335px;height:31px;background:#f5f5f5"></div>
<div style="position:absolute;left:1145px;top:199px;width:335px;height:1px;background:#c4c4c4"></div>
<div style="position:absolute;left:1145px;top:200px;width:335px;height:33px;background:#f5f5f5"></div>
<div style="position:absolute;left:1145px;top:233px;width:335px;height:1px;background:#c8c8c8"></div>
<div style="position:absolute;left:1275px;top:200px;width:1px;height:33px;background:#cfcfcf"></div>
<div style="position:absolute;left:1325px;top:200px;width:1px;height:33px;background:#cfcfcf"></div>
<div style="position:absolute;left:1379px;top:200px;width:1px;height:33px;background:#cfcfcf"></div>
<div class="t" style="left:1143px;top:177.07px;font-size:13.5px;color:#2a2a2a;font-weight:400;text-align:center;width:360px">3. Tannlæknir 1 (Tannlækningar)</div>
<div class="t" style="left:1163px;top:211.37px;font-size:13.5px;color:#2a2a2a;font-weight:400;">Dagsetning</div>
<svg style="position:absolute;left:1254px;top:216px" width="10" height="6" viewBox="0 0 10 6"><path d="M0 5.5H10L5 0.5Z" fill="#555"/></svg>
<div class="t" style="left:1289px;top:211.37px;font-size:13.5px;color:#2a2a2a;font-weight:400;">Tími</div>
<div class="t" style="left:1348px;top:211.37px;font-size:13.5px;color:#2a2a2a;font-weight:400;">#</div>
<div class="t" style="left:1380px;top:211.37px;width:100px;overflow:hidden;font-size:13.5px;color:#2a2a2a;text-indent:21px">Viðskiptavinur</div>
<svg style="position:absolute;left:1487px;top:175px" width="8" height="5" viewBox="0 0 8 5"><path d="M0 4.5H8L4 0.5Z" fill="#808080"/></svg>
<svg style="position:absolute;left:1487px;top:826px" width="8" height="5" viewBox="0 0 8 5"><path d="M0 0.5H8L4 4.5Z" fill="#808080"/></svg>
<div style="position:absolute;left:1486px;top:188px;width:10px;height:483px;background:#b6b6b6"></div>
<div style="position:absolute;left:1145px;top:234px;width:335px;height:34px;background:#d9effc"></div>
<div style="position:absolute;left:1177px;top:234px;width:303px;height:34px;background:#007bc2"></div>
<div class="t" style="left:1178px;top:236.07px;font-size:13.5px;color:#00e8f4;font-weight:400;">23.08.2024</div>
<div class="t" style="left:1379px;top:236.07px;font-size:13.5px;color:#00e8f4;font-weight:400;">Föstudag</div>
<svg style="position:absolute;left:1150.6px;top:240.8px;" width="19.0" height="19.0" viewBox="0 0 19.0 19.0"><circle cx="9.5" cy="9.5" r="7.5" fill="none" stroke="#4a4a4a" stroke-width="1.45"/><path d="M6.3 6.3 L11.7 11.7" stroke="#4a4a4a" stroke-width="1.5"/><path d="M12.1 6.9 V12.1 H6.9" fill="none" stroke="#4a4a4a" stroke-width="1.9" stroke-linejoin="miter"/></svg>
<div style="position:absolute;left:1145px;top:268px;width:335px;height:20px;background:#ddf9e1"></div>
<div class="t" style="left:1277px;top:269.97px;font-size:13.5px;color:#2a2a2a;font-weight:400;">09:00</div>
<div style="position:absolute;left:1145px;top:288px;width:335px;height:20px;background:#d9effc"></div>
<div class="t" style="left:1277px;top:289.97px;font-size:13.5px;color:#2a2a2a;font-weight:400;">09:30</div>
<div style="position:absolute;left:1145px;top:308px;width:335px;height:20px;background:#ddf9e1"></div>
<div style="position:absolute;left:1276px;top:308px;width:204px;height:20px;background:#fffab4"></div>
<div class="t" style="left:1326px;top:309.97px;font-size:13.5px;color:#111;font-weight:400;">000080</div>
<div class="t" style="left:1379.5px;top:309.97px;font-size:13.5px;color:#111;font-weight:400;">Sjúklingur 1</div>
<svg style="position:absolute;left:1211px;top:307.5px" width="22" height="22" viewBox="0 0 22 22"><path d="M3.5 5.2 C3.2 8.6 5 11.8 8.4 14.6 C10.8 16.6 13.4 18 15.8 17.8" stroke="#000" stroke-width="4" fill="none" stroke-linecap="round"/><ellipse cx="6.5" cy="3.9" rx="3.3" ry="2.1" transform="rotate(45 6.5 3.9)" fill="#ff3b24"/><ellipse cx="16.6" cy="14.4" rx="3.3" ry="2.1" transform="rotate(50 16.6 14.4)" fill="#ff3b24"/></svg><svg style="position:absolute;left:1235.5px;top:312px" width="13" height="12" viewBox="0 0 13 12"><path d="M2.6 2.2 L10.4 9.2 M10.4 2.2 L2.6 9.2" stroke="#ff9a10" stroke-width="3.2" stroke-linecap="round"/><path d="M6.5 0.6 V10.8" stroke="#ffa020" stroke-width="1.1"/><path d="M3 2.6 L10 8.8 M10 2.6 L3 8.8" stroke="#fff21a" stroke-width="1.4" stroke-linecap="round"/><circle cx="6.5" cy="5.7" r="1.7" fill="#fff850"/></svg><svg style="position:absolute;left:1255px;top:311px" width="12" height="12" viewBox="0 0 12 12"><path d="M1.2 5.2 L4.6 8.8 L10.3 1.8" stroke="#000" stroke-width="2.6" fill="none" stroke-linejoin="miter"/></svg>
<div class="t" style="left:1277px;top:309.97px;font-size:13.5px;color:#111;font-weight:400;">10:00</div>
<div style="position:absolute;left:1145px;top:328px;width:335px;height:20px;background:#d9effc"></div>
<div class="t" style="left:1277px;top:329.97px;font-size:13.5px;color:#2a2a2a;font-weight:400;">10:30</div>
<div style="position:absolute;left:1145px;top:348px;width:335px;height:20px;background:#ddf9e1"></div>
<div style="position:absolute;left:1276px;top:348px;width:204px;height:20px;background:#fffab4"></div>
<div class="t" style="left:1326px;top:349.97px;font-size:13.5px;color:#111;font-weight:400;">000081</div>
<div class="t" style="left:1379.5px;top:349.97px;font-size:13.5px;color:#111;font-weight:400;">Sjúklingur 2</div>
<svg style="position:absolute;left:1211px;top:347.5px" width="22" height="22" viewBox="0 0 22 22"><path d="M3.5 5.2 C3.2 8.6 5 11.8 8.4 14.6 C10.8 16.6 13.4 18 15.8 17.8" stroke="#000" stroke-width="4" fill="none" stroke-linecap="round"/><ellipse cx="6.5" cy="3.9" rx="3.3" ry="2.1" transform="rotate(45 6.5 3.9)" fill="#ff3b24"/><ellipse cx="16.6" cy="14.4" rx="3.3" ry="2.1" transform="rotate(50 16.6 14.4)" fill="#ff3b24"/></svg><svg style="position:absolute;left:1255px;top:351px" width="12" height="12" viewBox="0 0 12 12"><path d="M1.2 5.2 L4.6 8.8 L10.3 1.8" stroke="#000" stroke-width="2.6" fill="none" stroke-linejoin="miter"/></svg>
<div class="t" style="left:1277px;top:349.97px;font-size:13.5px;color:#111;font-weight:400;">11:00</div>
<div style="position:absolute;left:1145px;top:368px;width:335px;height:20px;background:#d9effc"></div>
<div class="t" style="left:1277px;top:369.97px;font-size:13.5px;color:#2a2a2a;font-weight:400;">11:30</div>
<div style="position:absolute;left:1145px;top:388px;width:335px;height:20px;background:#ddf9e1"></div>
<div class="t" style="left:1277px;top:389.97px;font-size:13.5px;color:#2a2a2a;font-weight:400;">12:00</div>
<div style="position:absolute;left:1145px;top:408px;width:335px;height:20px;background:#d9effc"></div>
<div class="t" style="left:1277px;top:409.97px;font-size:13.5px;color:#2a2a2a;font-weight:400;">12:30</div>
<div style="position:absolute;left:1145px;top:428px;width:335px;height:20px;background:#ddf9e1"></div>
<div class="t" style="left:1277px;top:429.97px;font-size:13.5px;color:#2a2a2a;font-weight:400;">13:00</div>
<div style="position:absolute;left:1145px;top:448px;width:335px;height:20px;background:#d9effc"></div>
<div class="t" style="left:1277px;top:449.97px;font-size:13.5px;color:#2a2a2a;font-weight:400;">13:30</div>
<div style="position:absolute;left:1145px;top:468px;width:335px;height:20px;background:#ddf9e1"></div>
<div class="t" style="left:1277px;top:469.97px;font-size:13.5px;color:#2a2a2a;font-weight:400;">14:00</div>
<div style="position:absolute;left:1145px;top:488px;width:335px;height:20px;background:#d9effc"></div>
<div class="t" style="left:1277px;top:489.97px;font-size:13.5px;color:#2a2a2a;font-weight:400;">14:30</div>
<div style="position:absolute;left:1145px;top:508px;width:335px;height:20px;background:#ddf9e1"></div>
<div class="t" style="left:1277px;top:509.97px;font-size:13.5px;color:#2a2a2a;font-weight:400;">15:00</div>
<div style="position:absolute;left:1145px;top:528px;width:335px;height:20px;background:#d9effc"></div>
<div class="t" style="left:1277px;top:529.97px;font-size:13.5px;color:#2a2a2a;font-weight:400;">15:30</div>
<div style="position:absolute;left:1145px;top:548px;width:335px;height:20px;background:#ddf9e1"></div>
<div class="t" style="left:1277px;top:549.97px;font-size:13.5px;color:#2a2a2a;font-weight:400;">16:00</div>
<div style="position:absolute;left:1145px;top:568px;width:335px;height:20px;background:#d9effc"></div>
<div class="t" style="left:1277px;top:569.97px;font-size:13.5px;color:#2a2a2a;font-weight:400;">16:30</div>
<div style="position:absolute;left:1145px;top:588px;width:335px;height:20px;background:#ddf9e1"></div>
<div class="t" style="left:1277px;top:589.97px;font-size:13.5px;color:#2a2a2a;font-weight:400;">17:00</div>
<div style="position:absolute;left:1145px;top:608px;width:335px;height:20px;background:#d9effc"></div>
<div class="t" style="left:1277px;top:609.97px;font-size:13.5px;color:#2a2a2a;font-weight:400;">17:30</div>
<div style="position:absolute;left:1145px;top:628px;width:335px;height:34px;background:#ddf9e1"></div>
<div style="position:absolute;left:1177px;top:628px;width:303px;height:34px;background:#007bc2"></div>
<div class="t" style="left:1178px;top:630.07px;font-size:13.5px;color:#ffffff;font-weight:400;">24.08.2024</div>
<div class="t" style="left:1379px;top:630.07px;font-size:13.5px;color:#ffffff;font-weight:400;">Laugardag</div>
<svg style="position:absolute;left:1150.6px;top:634.8px;" width="19.0" height="19.0" viewBox="0 0 19.0 19.0"><circle cx="9.5" cy="9.5" r="7.5" fill="none" stroke="#4a4a4a" stroke-width="1.45"/><path d="M6.3 6.3 L11.7 11.7" stroke="#4a4a4a" stroke-width="1.5"/><path d="M12.1 6.9 V12.1 H6.9" fill="none" stroke="#4a4a4a" stroke-width="1.9" stroke-linejoin="miter"/></svg>
<div style="position:absolute;left:1145px;top:662px;width:335px;height:20px;background:#d9effc"></div>
<div class="t" style="left:1277px;top:663.97px;font-size:13.5px;color:#2a2a2a;font-weight:400;">09:00</div>
<div style="position:absolute;left:1145px;top:682px;width:335px;height:20px;background:#ddf9e1"></div>
<div class="t" style="left:1277px;top:683.97px;font-size:13.5px;color:#2a2a2a;font-weight:400;">09:30</div>
<div style="position:absolute;left:1145px;top:702px;width:335px;height:20px;background:#d9effc"></div>
<div style="position:absolute;left:1276px;top:702px;width:204px;height:20px;background:#fffab4"></div>
<div class="t" style="left:1326px;top:703.97px;font-size:13.5px;color:#c41c1c;font-weight:400;">000085</div>
<div class="t" style="left:1379.5px;top:703.97px;font-size:13.5px;color:#c41c1c;font-weight:400;">Sjúklingur 6</div>
<svg style="position:absolute;left:1211px;top:701.5px" width="22" height="22" viewBox="0 0 22 22"><path d="M3.5 5.2 C3.2 8.6 5 11.8 8.4 14.6 C10.8 16.6 13.4 18 15.8 17.8" stroke="#000" stroke-width="4" fill="none" stroke-linecap="round"/><ellipse cx="6.5" cy="3.9" rx="3.3" ry="2.1" transform="rotate(45 6.5 3.9)" fill="#ff3b24"/><ellipse cx="16.6" cy="14.4" rx="3.3" ry="2.1" transform="rotate(50 16.6 14.4)" fill="#ff3b24"/></svg>
<div class="t" style="left:1277px;top:703.97px;font-size:13.5px;color:#c41c1c;font-weight:400;">10:00</div>
<div style="position:absolute;left:1145px;top:722px;width:335px;height:20px;background:#ddf9e1"></div>
<div class="t" style="left:1277px;top:723.97px;font-size:13.5px;color:#2a2a2a;font-weight:400;">10:30</div>
<div style="position:absolute;left:1145px;top:742px;width:335px;height:20px;background:#d9effc"></div>
<div class="t" style="left:1277px;top:743.97px;font-size:13.5px;color:#2a2a2a;font-weight:400;">11:00</div>
<div style="position:absolute;left:1145px;top:762px;width:335px;height:20px;background:#ddf9e1"></div>
<div class="t" style="left:1277px;top:763.97px;font-size:13.5px;color:#2a2a2a;font-weight:400;">11:30</div>
<div style="position:absolute;left:1145px;top:782px;width:335px;height:20px;background:#d9effc"></div>
<div class="t" style="left:1277px;top:783.97px;font-size:13.5px;color:#2a2a2a;font-weight:400;">12:00</div>
<div style="position:absolute;left:1145px;top:802px;width:335px;height:20px;background:#ddf9e1"></div>
<div class="t" style="left:1277px;top:803.97px;font-size:13.5px;color:#2a2a2a;font-weight:400;">12:30</div>
<div style="position:absolute;left:1145px;top:822px;width:335px;height:17px;background:#d9effc"></div>
<div class="t" style="left:1277px;top:823.97px;font-size:13.5px;color:#2a2a2a;font-weight:400;">13:00</div>
<div style="position:absolute;left:22px;top:871px;width:163px;height:54px;box-sizing:border-box;border:1px solid #c8c8c8;border-bottom:none;background:#fff"></div>
<div style="position:absolute;left:22px;top:924px;width:163px;height:3px;background:#1a9be8"></div>
<div class="t" style="left:82px;top:892.57px;font-size:13.5px;color:#1e96e6;font-weight:400;">Skráning</div>
<svg style="position:absolute;left:152px;top:895px" width="12" height="9" viewBox="0 0 12 9"><path d="M1.5 0.5L10.5 8.5M10.5 0.5L1.5 8.5" stroke="#1e96e6" stroke-width="2"/></svg>
<div style="position:absolute;left:229px;top:931px;width:1px;height:17px;background:#c0c0c0"></div>
<div style="position:absolute;left:399px;top:931px;width:1px;height:17px;background:#c0c0c0"></div>
<div style="position:absolute;left:578px;top:931px;width:1px;height:17px;background:#c0c0c0"></div>
<div style="position:absolute;left:727px;top:931px;width:1px;height:17px;background:#c0c0c0"></div>
<div style="position:absolute;left:875px;top:931px;width:1px;height:17px;background:#c0c0c0"></div>
<div style="position:absolute;left:1493px;top:931px;width:1px;height:17px;background:#c0c0c0"></div>
<div class="t" style="left:70px;top:934.37px;font-size:13.5px;color:#333;font-weight:400;;letter-spacing:0.113px">7.2.9045.10 Standard</div>
<div class="t" style="left:281px;top:934.37px;font-size:13.5px;color:#333;font-weight:400;;letter-spacing:0.164px">localhost (utf8)</div>
<div class="t" style="left:451px;top:934.37px;font-size:13.5px;color:#333;font-weight:400;;letter-spacing:-0.213px">NIKOLAY (MAIN)</div>
<div class="t" style="left:631px;top:934.37px;font-size:13.5px;color:#333;font-weight:400;;letter-spacing:0.159px">23.08.2024</div>
<div class="t" style="left:761.5px;top:934.37px;font-size:13.5px;color:#333;font-weight:400;;letter-spacing:0.252px">09:36:30:759</div>
<svg style="position:absolute;left:28px;top:929px;" width="21" height="21" viewBox="0 0 21 21"><circle cx="10.5" cy="10.3" r="10" fill="#4a7cb8"/><rect x="8.9" y="8.2" width="3.2" height="8.2" fill="#fff"/><circle cx="10.5" cy="5.4" r="1.8" fill="#fff"/></svg><svg style="position:absolute;left:243px;top:929px;" width="16" height="19" viewBox="0 0 16 19"><defs><linearGradient id="dbg" x1="0" y1="0" x2="1" y2="0"><stop offset="0" stop-color="#d8882a"/><stop offset="0.45" stop-color="#fce8a8"/><stop offset="1" stop-color="#d48020"/></linearGradient></defs><rect x="0.8" y="1" width="14.4" height="17" rx="2.5" fill="url(#dbg)" stroke="#c87a28" stroke-width="0.8"/><path d="M1 6.6 Q8 8.2 15 6.6 M1 12.2 Q8 13.8 15 12.2" stroke="#c07020" stroke-width="0.9" fill="none"/></svg><svg style="position:absolute;left:412px;top:929.5px;" width="18" height="19" viewBox="0 0 18 19"><defs><linearGradient id="pg5" x1="0" y1="0" x2="0" y2="1"><stop offset="0" stop-color="#a8da60"/><stop offset="0.6" stop-color="#86c232"/><stop offset="1" stop-color="#4a8a1c"/></linearGradient><linearGradient id="ph5" x1="0" y1="0" x2="1" y2="1"><stop offset="0" stop-color="#e0a070"/><stop offset="1" stop-color="#a85a30"/></linearGradient><radialGradient id="pf5" cx="0.4" cy="0.35" r="0.7"><stop offset="0" stop-color="#fff4e0"/><stop offset="0.6" stop-color="#f4c8a0"/><stop offset="1" stop-color="#c87850"/></radialGradient></defs><g transform="scale(0.97)"><path d="M0.4 15.8 C0.6 13 4 11.6 9 11.6 C14 11.6 17.4 13 17.6 15.8 C17.6 17.5 14 17.9 9 17.9 C4 17.9 0.4 17.5 0.4 15.8Z" fill="url(#pg5)"/><ellipse cx="9" cy="6.4" rx="5.1" ry="5.9" fill="url(#ph5)"/><ellipse cx="9.3" cy="7.6" rx="2.9" ry="4.1" fill="url(#pf5)"/><path d="M5.5 4.2 Q9 1.5 12.8 4.5 Q10.5 3.6 8 5 Z" fill="#c07040"/></g></svg><svg style="position:absolute;left:591px;top:930px;" width="18" height="18" viewBox="0 0 18 18"><rect x="0.5" y="0.5" width="17" height="17" rx="1.2" fill="#f4f6fc" stroke="#8898d0" stroke-width="1"/><path d="M0.5 1.7 Q0.5 0.5 1.7 0.5 H16.3 Q17.5 0.5 17.5 1.7 V5.3 H0.5Z" fill="#e86050"/><text x="9" y="15.4" text-anchor="middle" font-family="Liberation Sans" font-weight="700" font-size="10.5" fill="#2a3650" letter-spacing="-0.4">31</text></svg><svg style="position:absolute;left:1505px;top:932px;" width="20" height="20" viewBox="0 0 20 20"><path d="M14.400000000000091 3.4999999999999547 L16.20000000000009 5.2999999999999545 L14.400000000000091 7.099999999999954 L12.60000000000009 5.2999999999999545Z" fill="#707070"/><path d="M9.400000000000091 8.599999999999977 L11.200000000000092 10.399999999999977 L9.400000000000091 12.199999999999978 L7.600000000000091 10.399999999999977Z" fill="#707070"/><path d="M14.400000000000091 8.599999999999977 L16.20000000000009 10.399999999999977 L14.400000000000091 12.199999999999978 L12.60000000000009 10.399999999999977Z" fill="#707070"/><path d="M4.5 13.599999999999977 L6.3 15.399999999999977 L4.5 17.199999999999978 L2.7 15.399999999999977Z" fill="#707070"/><path d="M9.400000000000091 13.599999999999977 L11.200000000000092 15.399999999999977 L9.400000000000091 17.199999999999978 L7.600000000000091 15.399999999999977Z" fill="#707070"/><path d="M14.400000000000091 13.599999999999977 L16.20000000000009 15.399999999999977 L14.400000000000091 17.199999999999978 L12.60000000000009 15.399999999999977Z" fill="#707070"/></svg><svg style="position:absolute;left:40px;top:886px;" width="31" height="28" viewBox="0 0 31 28"><defs><linearGradient id="wtb" x1="0" y1="0" x2="0" y2="1"><stop offset="0" stop-color="#8ab4f0"/><stop offset="1" stop-color="#4a7ed0"/></linearGradient><linearGradient id="wbd" x1="0" y1="0" x2="0" y2="1"><stop offset="0" stop-color="#f4f6fc"/><stop offset="1" stop-color="#dfe4f2"/></linearGradient></defs><rect x="0.7" y="0.7" width="29.3" height="26" rx="2" fill="url(#wbd)" stroke="#6a78a8" stroke-width="1.2"/><path d="M0.7 2.7 Q0.7 0.7 2.7 0.7 H28 Q30 0.7 30 2.7 V5.6 H0.7Z" fill="url(#wtb)"/><circle cx="26" cy="3.2" r="1.2" fill="#e84040"/></svg></body></html>
